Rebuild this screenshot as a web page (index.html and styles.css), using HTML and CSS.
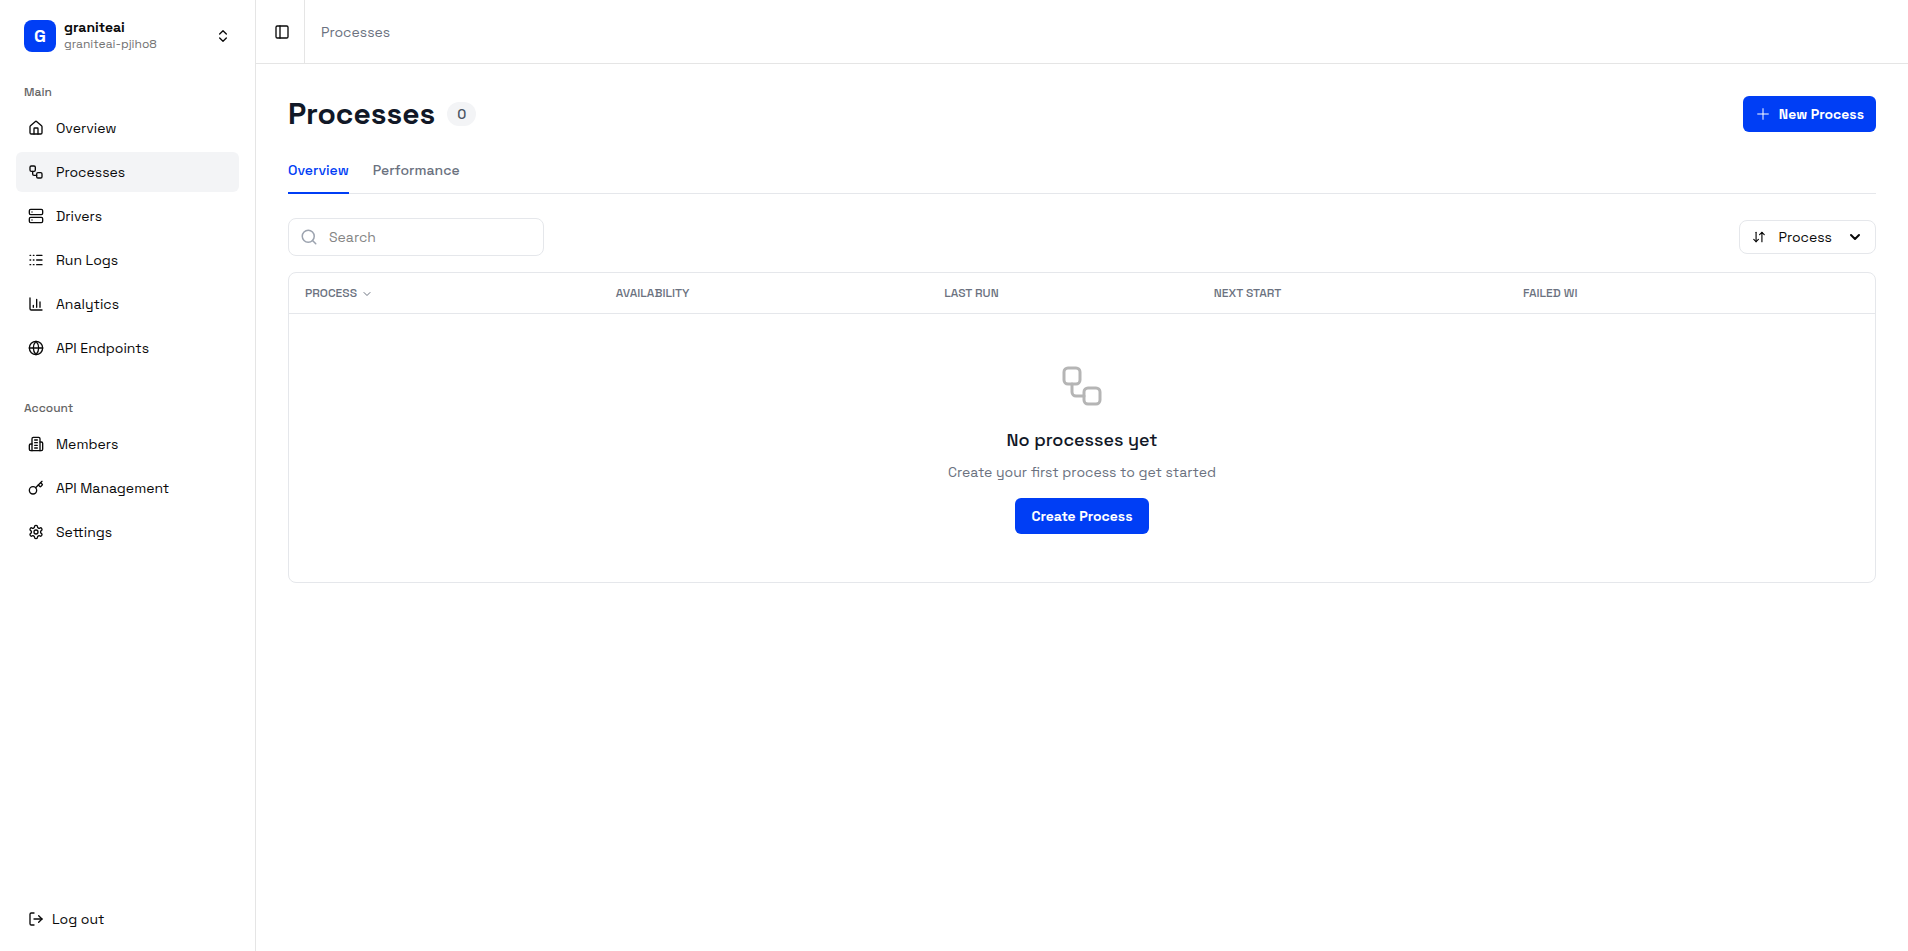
FILE: index.html
```html
<!DOCTYPE html>
<html lang="en">
<head>
    <meta charset="UTF-8">
    <meta name="viewport" content="width=device-width, initial-scale=1.0">
    <title>Processes</title>
    <link rel="stylesheet" href="styles.css">
</head>
<body>

<aside class="sidebar">
    <button class="workspace" type="button">
        <span class="logo">G</span>
        <span class="workspace-text">
            <span class="workspace-name">graniteai</span>
            <span class="workspace-id">graniteai-pjiho8</span>
        </span>
        <svg class="icon" viewBox="0 0 24 24"><path d="m7 15 5 5 5-5"/><path d="m7 9 5-5 5 5"/></svg>
    </button>

    <nav class="nav">
        <h2 class="nav-label">Main</h2>
        <a class="nav-item" href="#overview">
            <svg class="icon" viewBox="0 0 24 24"><path d="M15 21v-8a1 1 0 0 0-1-1h-4a1 1 0 0 0-1 1v8"/><path d="M3 10a2 2 0 0 1 .709-1.528l7-5.999a2 2 0 0 1 2.582 0l7 5.999A2 2 0 0 1 21 10v9a2 2 0 0 1-2 2H5a2 2 0 0 1-2-2z"/></svg>
            Overview
        </a>
        <a class="nav-item active" href="#processes">
            <svg class="icon" viewBox="0 0 24 24"><rect width="8" height="8" x="3" y="3" rx="2"/><path d="M7 11v4a2 2 0 0 0 2 2h4"/><rect width="8" height="8" x="13" y="13" rx="2"/></svg>
            Processes
        </a>
        <a class="nav-item" href="#drivers">
            <svg class="icon" viewBox="0 0 24 24"><rect width="20" height="8" x="2" y="2" rx="2"/><rect width="20" height="8" x="2" y="14" rx="2"/><path d="M6 6h.01M6 18h.01"/></svg>
            Drivers
        </a>
        <a class="nav-item" href="#run-logs">
            <svg class="icon" viewBox="0 0 24 24"><path d="M13 12h8M13 19h8M13 5h8M3 12h1M3 19h1M3 5h1M8 12h1M8 19h1M8 5h1"/></svg>
            Run Logs
        </a>
        <a class="nav-item" href="#analytics">
            <svg class="icon" viewBox="0 0 24 24"><path d="M3 3v16a2 2 0 0 0 2 2h16"/><path d="M18 17V9M13 17V5M8 17v-3"/></svg>
            Analytics
        </a>
        <a class="nav-item" href="#api-endpoints">
            <svg class="icon" viewBox="0 0 24 24"><circle cx="12" cy="12" r="10"/><path d="M12 2a14.5 14.5 0 0 0 0 20 14.5 14.5 0 0 0 0-20"/><path d="M2 12h20"/></svg>
            API Endpoints
        </a>
    </nav>

    <nav class="nav">
        <h2 class="nav-label">Account</h2>
        <a class="nav-item" href="#members">
            <svg class="icon" viewBox="0 0 24 24"><path d="M6 22V4a2 2 0 0 1 2-2h8a2 2 0 0 1 2 2v18Z"/><path d="M6 12H4a2 2 0 0 0-2 2v6a2 2 0 0 0 2 2h2"/><path d="M18 9h2a2 2 0 0 1 2 2v9a2 2 0 0 1-2 2h-2"/><path d="M10 6h4M10 10h4M10 14h4M10 18h4"/></svg>
            Members
        </a>
        <a class="nav-item" href="#api-management">
            <svg class="icon" viewBox="0 0 24 24"><path d="m15.5 7.5 2.3 2.3a1 1 0 0 0 1.4 0l2.1-2.1a1 1 0 0 0 0-1.4L19 4"/><path d="m21 2-9.6 9.6"/><circle cx="7.5" cy="15.5" r="5.5"/></svg>
            API Management
        </a>
        <a class="nav-item" href="#settings">
            <svg class="icon" viewBox="0 0 24 24"><path d="M12.22 2h-.44a2 2 0 0 0-2 2v.18a2 2 0 0 1-1 1.73l-.43.25a2 2 0 0 1-2 0l-.15-.08a2 2 0 0 0-2.73.73l-.22.38a2 2 0 0 0 .73 2.73l.15.1a2 2 0 0 1 1 1.72v.51a2 2 0 0 1-1 1.74l-.15.09a2 2 0 0 0-.73 2.73l.22.38a2 2 0 0 0 2.73.73l.15-.08a2 2 0 0 1 2 0l.43.25a2 2 0 0 1 1 1.73V20a2 2 0 0 0 2 2h.44a2 2 0 0 0 2-2v-.18a2 2 0 0 1 1-1.73l.43-.25a2 2 0 0 1 2 0l.15.08a2 2 0 0 0 2.73-.73l.22-.39a2 2 0 0 0-.73-2.73l-.15-.08a2 2 0 0 1-1-1.74v-.5a2 2 0 0 1 1-1.74l.15-.09a2 2 0 0 0 .73-2.73l-.22-.38a2 2 0 0 0-2.73-.73l-.15.08a2 2 0 0 1-2 0l-.43-.25a2 2 0 0 1-1-1.73V4a2 2 0 0 0-2-2z"/><circle cx="12" cy="12" r="3"/></svg>
            Settings
        </a>
    </nav>

    <button class="logout" type="button">
        <svg class="icon" viewBox="0 0 24 24"><path d="M9 21H5a2 2 0 0 1-2-2V5a2 2 0 0 1 2-2h4"/><path d="m16 17 5-5-5-5"/><path d="M21 12H9"/></svg>
        Log out
    </button>
</aside>

<div class="page">
    <header class="topbar">
        <button class="sidebar-toggle" type="button" aria-label="Toggle sidebar">
            <svg class="icon" viewBox="0 0 24 24"><rect width="18" height="18" x="3" y="3" rx="2"/><path d="M9 3v18"/></svg>
        </button>
        <span class="breadcrumb">Processes</span>
    </header>

    <main class="content">
        <div class="title-row">
            <h1>Processes</h1>
            <span class="count">0</span>
            <button class="btn btn-new" type="button">
                <svg class="icon icon-thin" viewBox="0 0 24 24"><path d="M4 12h16M12 4v16"/></svg>
                New Process
            </button>
        </div>

        <div class="tabs">
            <a class="tab active" href="#overview-tab">Overview</a>
            <a class="tab" href="#performance-tab">Performance</a>
        </div>

        <div class="toolbar">
            <label class="search">
                <svg class="icon icon-search" viewBox="0 0 24 24"><circle cx="11" cy="11" r="8"/><path d="m21 21-4.3-4.3"/></svg>
                <input type="text" placeholder="Search" aria-label="Search">
            </label>
            <button class="sort" type="button">
                <svg class="icon icon-sort" viewBox="0 0 24 24"><path d="m3 16 4 4 4-4"/><path d="M7 20V4"/><path d="m21 8-4-4-4 4"/><path d="M17 4v16"/></svg>
                <span>Process</span>
                <svg class="icon icon-caret" viewBox="0 0 24 24"><path d="m6 9 6 6 6-6"/></svg>
            </button>
        </div>

        <div class="card">
            <table>
                <thead>
                    <tr>
                        <th class="col-process">Process <svg class="icon icon-chevron" viewBox="0 0 24 24"><path d="m6 9 6 6 6-6"/></svg></th>
                        <th class="col-availability">Availability</th>
                        <th class="col-last">Last run</th>
                        <th class="col-next">Next start</th>
                        <th>Failed WI</th>
                    </tr>
                </thead>
                <tbody>
                    <tr>
                        <td colspan="5">
                            <div class="empty">
                                <svg class="icon icon-empty" viewBox="0 0 24 24"><rect width="8" height="8" x="3" y="3" rx="2"/><path d="M7 11v4a2 2 0 0 0 2 2h4"/><rect width="8" height="8" x="13" y="13" rx="2"/></svg>
                                <h3>No processes yet</h3>
                                <p>Create your first process to get started</p>
                                <button class="btn" type="button">Create Process</button>
                            </div>
                        </td>
                    </tr>
                </tbody>
            </table>
        </div>
    </main>
</div>

</body>
</html>
```

FILE: styles.css
```css
* {
    box-sizing: border-box;
}
body {
    margin: 0;
    display: flex;
    min-height: 100vh;
    font-family: "Space Grotesk", Inter, sans-serif;
    font-size: 14px;
    line-height: 20px;
    color: #0a0a0a;
    background-color: #fff;
}
h1, h2, h3, p {
    margin: 0;
}
a {
    color: inherit;
    text-decoration: none;
}
button, input {
    font: inherit;
    color: inherit;
}
button {
    padding: 0;
    border: none;
    background: none;
    cursor: pointer;
}
.icon {
    width: 16px;
    height: 16px;
    flex-shrink: 0;
    fill: none;
    stroke: currentColor;
    stroke-width: 2;
    stroke-linecap: round;
    stroke-linejoin: round;
}

/* Sidebar */
.sidebar {
    display: flex;
    flex-direction: column;
    flex-shrink: 0;
    width: 256px;
    padding: 16px;
    border-right: 1px solid #e5e5e5;
}
.workspace {
    display: flex;
    align-items: center;
    gap: 8px;
    height: 40px;
    padding: 0 8px;
    margin-bottom: 20px;
    text-align: left;
}
.logo {
    width: 32px;
    height: 32px;
    border-radius: 8px;
    background-color: #003ef5;
    color: #fff;
    font-size: 18px;
    font-weight: 700;
    line-height: 32px;
    text-align: center;
}
.workspace-text {
    display: flex;
    flex-direction: column;
    flex: 1;
    padding-bottom: 2px;
}
.workspace-name {
    font-weight: 600;
    line-height: 18px;
}
.workspace-id {
    font-size: 12px;
    line-height: 16px;
    color: #737373;
}
.nav {
    display: flex;
    flex-direction: column;
    gap: 4px;
    margin-bottom: 24px;
}
.nav-label {
    padding: 8px 8px 4px;
    font-size: 12px;
    font-weight: 500;
    line-height: 16px;
    color: #666;
}
.nav-item {
    display: flex;
    align-items: center;
    gap: 12px;
    height: 40px;
    padding: 0 12px;
    border-radius: 6px;
}
.nav-item.active {
    background-color: #f3f4f6;
}
.logout {
    display: flex;
    align-items: center;
    gap: 8px;
    height: 32px;
    padding: 0 12px;
    margin-top: auto;
}

/* Page */
.page {
    flex: 1;
    min-width: 0;
}
.topbar {
    display: flex;
    align-items: center;
    height: 64px;
    border-bottom: 1px solid #e5e5e5;
}
.sidebar-toggle {
    display: flex;
    align-items: center;
    align-self: stretch;
    padding: 0 14px 0 18px;
    border-right: 1px solid #e5e5e5;
}
.breadcrumb {
    padding-left: 16px;
    color: #6b7280;
}
.content {
    padding: 32px;
}
.title-row {
    display: flex;
    align-items: center;
    gap: 12px;
}
h1 {
    font-size: 30px;
    font-weight: 700;
    line-height: 36px;
    color: #111827;
}
.count {
    padding: 2px 10px;
    border-radius: 12px;
    background-color: #f3f4f6;
    color: #4b5563;
    font-weight: 500;
}
.btn {
    display: flex;
    align-items: center;
    gap: 8px;
    height: 36px;
    padding: 0 16px;
    border-radius: 6px;
    background-color: #003ef5;
    color: #fff;
    font-weight: 600;
}
.btn-new {
    padding: 0 12px;
    margin-left: auto;
}
.icon-thin {
    stroke-width: 1.5;
}
.tabs {
    display: flex;
    gap: 24px;
    margin-top: 16px;
    border-bottom: 1px solid #e5e7eb;
}
.tab {
    padding: 12px 0;
    margin-bottom: -1px;
    border-bottom: 2px solid transparent;
    font-weight: 500;
    color: #6b7280;
}
.tab.active {
    border-color: #003ef5;
    color: #003ef5;
}
.toolbar {
    display: flex;
    align-items: center;
    justify-content: space-between;
    margin: 24px 0 16px;
}
.search {
    display: flex;
    align-items: center;
    gap: 11px;
    width: 256px;
    height: 38px;
    padding: 0 11px;
    border: 1px solid #e5e7eb;
    border-radius: 8px;
}
.search input {
    flex: 1;
    min-width: 0;
    padding: 0;
    border: none;
    outline: none;
}
.search input::placeholder {
    color: #858585;
}
.icon-search {
    width: 18px;
    height: 18px;
    color: #9ca3af;
}
.sort {
    display: flex;
    align-items: center;
    height: 34px;
    padding: 0 12px;
    border: 1px solid #e5e7eb;
    border-radius: 8px;
}
.icon-sort {
    width: 14px;
    height: 14px;
    margin-right: 12px;
}
.icon-caret {
    margin-left: 15px;
    stroke-width: 3;
}

/* Table */
.card {
    border: 1px solid #e5e7eb;
    border-radius: 8px;
    overflow: hidden;
}
table {
    width: 100%;
    border-spacing: 0;
    table-layout: fixed;
}
th {
    height: 41px;
    padding: 0 16px;
    border-bottom: 1px solid #e5e7eb;
    font-size: 12px;
    font-weight: 500;
    line-height: 16px;
    text-align: left;
    text-transform: uppercase;
    color: #6b7280;
}
td {
    padding: 0;
}
.col-process {
    width: 19.6%;
}
.col-availability {
    width: 20.7%;
}
.col-last {
    width: 17%;
}
.col-next {
    width: 19.5%;
}
.icon-chevron {
    width: 12px;
    height: 12px;
    margin-left: 1px;
    vertical-align: middle;
}
.empty {
    display: flex;
    flex-direction: column;
    align-items: center;
    padding: 48px 16px;
}
.icon-empty {
    width: 48px;
    height: 48px;
    stroke-width: 1.5;
    color: #b5b5b5;
}
.empty h3 {
    margin-top: 16px;
    font-size: 18px;
    font-weight: 500;
    line-height: 28px;
    color: #111827;
}
.empty p {
    margin: 8px 0 16px;
    color: #6b7280;
}
```
